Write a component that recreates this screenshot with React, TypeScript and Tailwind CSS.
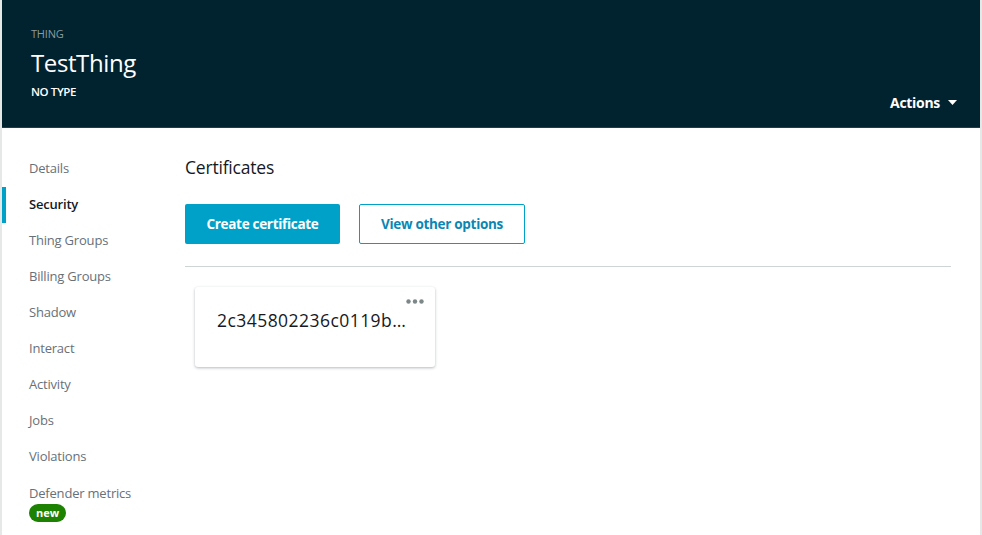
import React from 'react'

const navItems = [
  'Details',
  'Security',
  'Thing Groups',
  'Billing Groups',
  'Shadow',
  'Interact',
  'Activity',
  'Jobs',
  'Violations',
]

const App = () => {
  return (
    <div
      className='w-[982px] h-[535px] overflow-hidden bg-white border-l-2 border-r-2 border-[#e6e8e8] flex flex-col'
      style={{ fontFamily: '"Open Sans", "Noto Sans", Arial, sans-serif' }}
    >
      <header
        className='h-[128px] shrink-0 bg-[#012330] border-b border-[#1e3f4a] flex items-end justify-between pl-[29px] pr-[23px]'
      >
        <div
          className='flex flex-col self-start pt-[27px]'
        >
          <span className='text-[11px] leading-[14px] text-[#8d9a9c] tracking-[-0.2px]'>THING</span>
          <span className='text-[24px] leading-[30px] mt-[7px] text-white tracking-[-0.4px]'>TestThing</span>
          <span className='text-[11.5px] leading-[14px] mt-[7px] font-semibold text-white tracking-[-0.4px]'>NO TYPE</span>
        </div>
        <button
          className='flex items-center gap-[8px] mb-[14px] text-white text-[14px] font-bold tracking-[-0.3px]'
        >
          Actions
          <svg width='9' height='5' viewBox='0 0 9 5'>
            <path d='M0 0h9L4.5 5z' fill='#ffffff' />
          </svg>
        </button>
      </header>

      <div className='flex flex-1'>
        <nav className='w-[183px] shrink-0 flex flex-col pt-[23px]'>
          {navItems.map((item) => (
            <div
              key={item}
              className={
                item === 'Security'
                  ? 'h-[36px] flex items-center pl-[23px] border-l-[4px] border-[#00a1c9] text-[13px] font-semibold text-[#16191f] tracking-[-0.2px]'
                  : 'h-[36px] flex items-center pl-[23px] border-l-[4px] border-transparent text-[13px] text-[#687078] tracking-[-0.2px]'
              }
            >
              {item}
            </div>
          ))}
          <div className='flex flex-col items-start pl-[23px] border-l-[4px] border-transparent pt-[9px]'>
            <span className='text-[13px] leading-[18px] text-[#687078] tracking-[-0.2px]'>Defender metrics</span>
            <span className='mt-[2px] h-[18px] px-[7px] rounded-full bg-[#1d8102] text-white text-[11px] font-bold leading-[18px]'>new</span>
          </div>
        </nav>

        <main className='flex-1 pr-[29px] pt-[27px]'>
          <h2 className='text-[17.5px] leading-[24px] text-[#16191f] tracking-[-0.2px]'>Certificates</h2>
          <div className='flex gap-[19px] mt-[25px]'>
            <button className='w-[155px] h-[40px] bg-[#00a1c9] rounded-[2px] text-white text-[13.5px] font-bold tracking-[-0.3px]'>
              Create certificate
            </button>
            <button className='w-[166px] h-[40px] border border-[#00a1c9] rounded-[2px] text-[#0b86b3] text-[13.5px] font-bold tracking-[-0.3px]'>
              View other options
            </button>
          </div>
          <div className='mt-[22px] h-px bg-[#cfd4d4]' />
          <div className='mt-[20px] ml-[10px] w-[240px] h-[80px] rounded-[3px] bg-white shadow-[0_1px_3px_rgba(0,28,36,0.3)] relative pl-[22px] pt-[21px]'>
            <svg className='absolute right-[11px] top-[12px]' width='18' height='5' viewBox='0 0 18 5'>
              <circle cx='2.5' cy='2.5' r='2.2' fill='#7d8787' />
              <circle cx='9' cy='2.5' r='2.2' fill='#7d8787' />
              <circle cx='15.5' cy='2.5' r='2.2' fill='#7d8787' />
            </svg>
            <span className='text-[17.5px] leading-[24px] text-[#16191f] tracking-[0.45px]'>2c345802236c0119b…</span>
          </div>
        </main>
      </div>
    </div>
  )
}

export default App
